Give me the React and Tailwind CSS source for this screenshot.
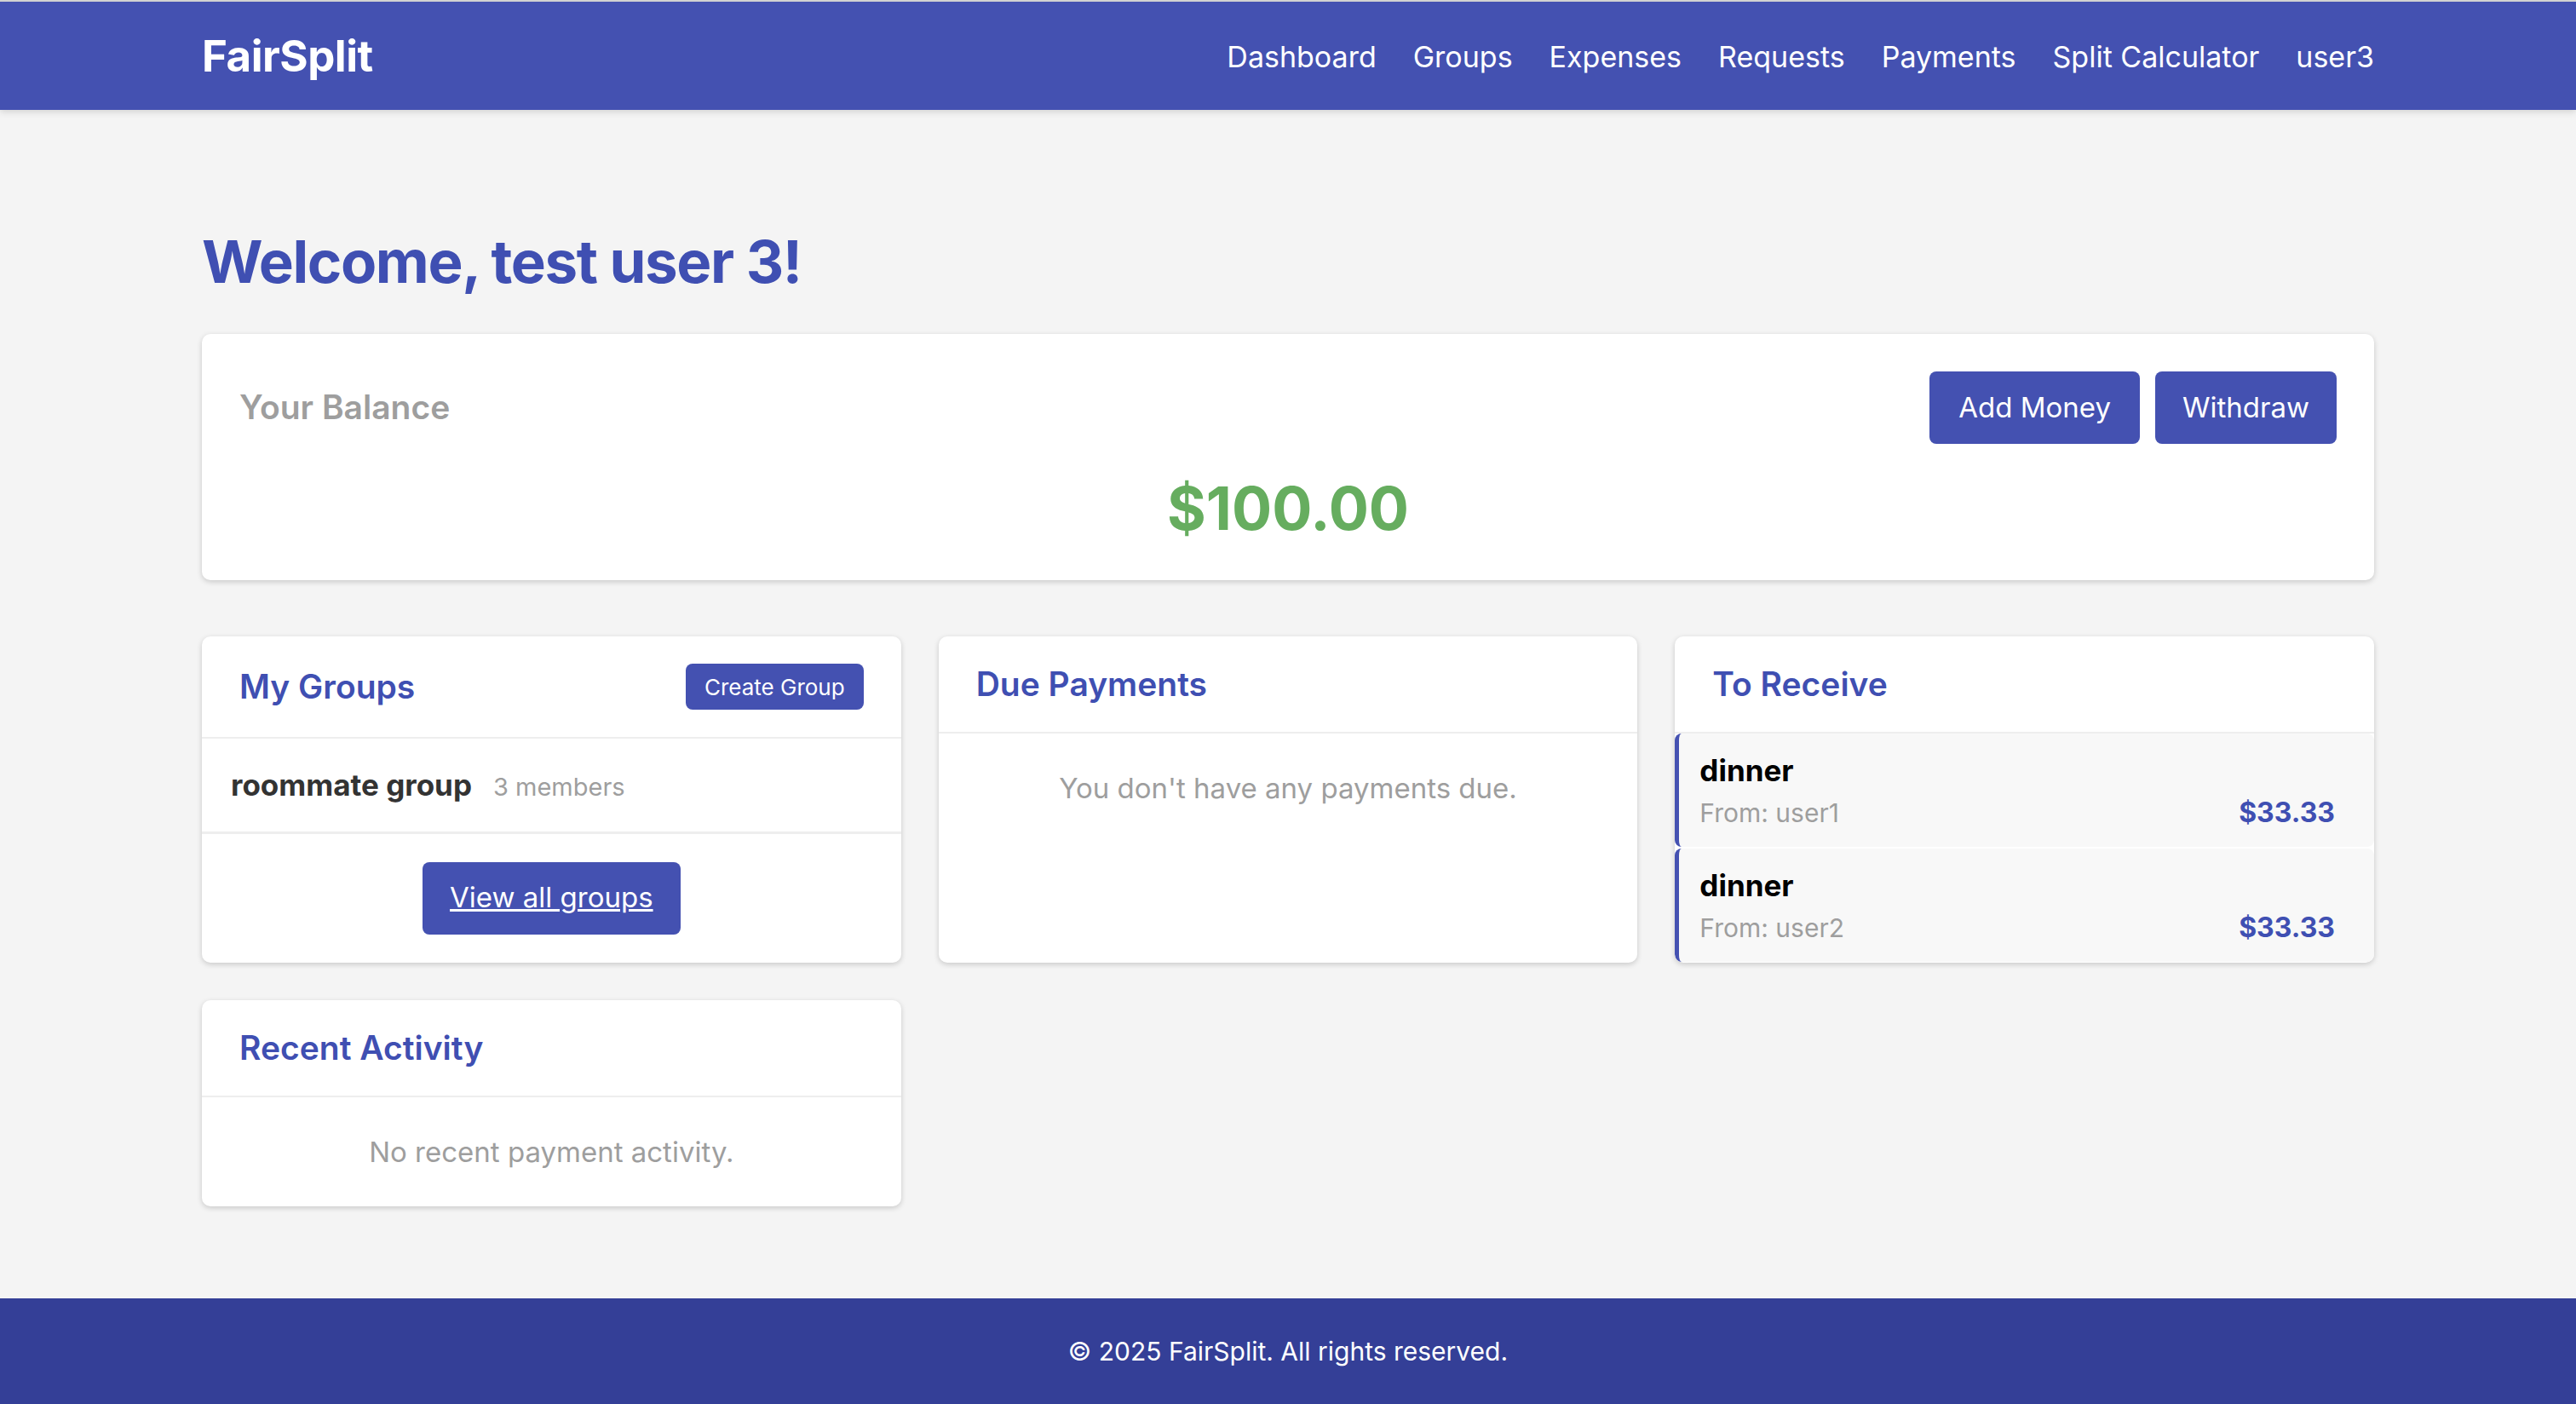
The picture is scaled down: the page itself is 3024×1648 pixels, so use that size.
import React from 'react';

const navLinks = ['Dashboard', 'Groups', 'Expenses', 'Requests', 'Payments', 'Split Calculator', 'user3'];

const receivables = [
  { title: 'dinner', from: 'user1', amount: '$33.33' },
  { title: 'dinner', from: 'user2', amount: '$33.33' },
];

function Card({ title, action, children }) {
  return (
    <div className="bg-white rounded-[10px] shadow-[0_2px_6px_rgba(0,0,0,0.18)] overflow-hidden flex flex-col">
      <div className="flex items-center justify-between px-[44px] py-[32px] border-b-2 border-[#eeeeee]">
        <h2 className="text-[39px] leading-[48px] font-semibold text-[#3F4FB2]">{title}</h2>
        {action}
      </div>
      {children}
    </div>
  );
}

function EmptyText({ children }) {
  return (
    <p className="py-[40px] text-center text-[33px] leading-[48px] text-[#9e9e9e]">{children}</p>
  );
}

export default function App() {
  return (
    <div className="min-h-screen flex flex-col bg-[#f4f4f4] font-['Inter','Liberation_Sans',sans-serif]">
      <nav className="bg-[#4451B1] border-t-2 border-[#d2d2d2] shadow-[0_2px_8px_rgba(0,0,0,0.15)]">
        <div className="w-[2550px] mx-auto h-[127px] pt-[2px] flex items-center justify-between">
          <a className="text-[51px] font-bold text-white tracking-[-0.5px]">FairSplit</a>
          <div className="flex items-center gap-[43px]">
            {navLinks.map((link) => (
              <a key={link} className="text-[34px] text-white">
                {link}
              </a>
            ))}
          </div>
        </div>
      </nav>

      <main className="flex-1 pt-[137px] pb-[106px]">
        <div className="w-[2550px] mx-auto">
          <h1 className="text-[69px] leading-[83px] font-bold text-[#3F4FB2] tracking-[-1.4px] mb-[43px]">
            Welcome, test user 3!
          </h1>

          <div className="bg-white rounded-[10px] shadow-[0_2px_6px_rgba(0,0,0,0.18)] p-[44px] pb-[49px]">
            <div className="flex items-center justify-between">
              <h3 className="text-[39px] font-semibold text-[#9e9e9e]">Your Balance</h3>
              <div className="flex gap-[18px]">
                <button className="h-[85px] px-[34px] rounded-[8px] bg-[#4451B1] text-white text-[33px]">
                  Add Money
                </button>
                <button className="h-[85px] px-[32px] rounded-[8px] bg-[#4451B1] text-white text-[33px]">
                  Withdraw
                </button>
              </div>
            </div>
            <div className="mt-[41px] text-center text-[70px] leading-[70px] font-bold text-[#66AD5F]">
              $100.00
            </div>
          </div>

          <div className="grid grid-cols-3 gap-[44px] mt-[66px]">
            <Card
              title="My Groups"
              action={
                <button className="h-[54px] px-[22px] rounded-[8px] bg-[#4451B1] text-white text-[26px]">
                  Create Group
                </button>
              }
            >
              <div className="flex items-baseline gap-[25px] px-[34px] py-[30px] border-b-[3px] border-[#eeeeee]">
                <span className="text-[35px] leading-[48px] font-bold text-[#333333]">roommate group</span>
                <span className="text-[29px] text-[#9e9e9e]">3 members</span>
              </div>
              <div className="flex justify-center py-[33px]">
                <a className="h-[85px] px-[32px] flex items-center rounded-[8px] bg-[#4451B1] text-white text-[33px] underline">
                  View all groups
                </a>
              </div>
            </Card>

            <Card title="Due Payments">
              <EmptyText>You don't have any payments due.</EmptyText>
            </Card>

            <Card title="To Receive">
              <div className="flex flex-col gap-[2px]">
                {receivables.map((r, i) => (
                  <div
                    key={i}
                    className="bg-[#f8f8f8] border-l-[5px] border-[#4451B1] rounded-[8px] pl-[24px] pr-[46px] py-[22px]"
                  >
                    <div className="text-[35px] leading-[42px] font-bold text-black">{r.title}</div>
                    <div className="mt-[11px] flex items-center justify-between">
                      <span className="text-[30px] leading-[36px] text-[#9e9e9e]">From: {r.from}</span>
                      <span className="text-[32px] leading-[36px] font-bold text-[#3F4FB2]">{r.amount}</span>
                    </div>
                  </div>
                ))}
              </div>
            </Card>

            <Card title="Recent Activity">
              <EmptyText>No recent payment activity.</EmptyText>
            </Card>
          </div>
        </div>
      </main>

      <footer className="bg-[#343F97] h-[124px] flex items-center justify-center">
        <p className="text-[30px] text-white">© 2025 FairSplit. All rights reserved.</p>
      </footer>
    </div>
  );
}
